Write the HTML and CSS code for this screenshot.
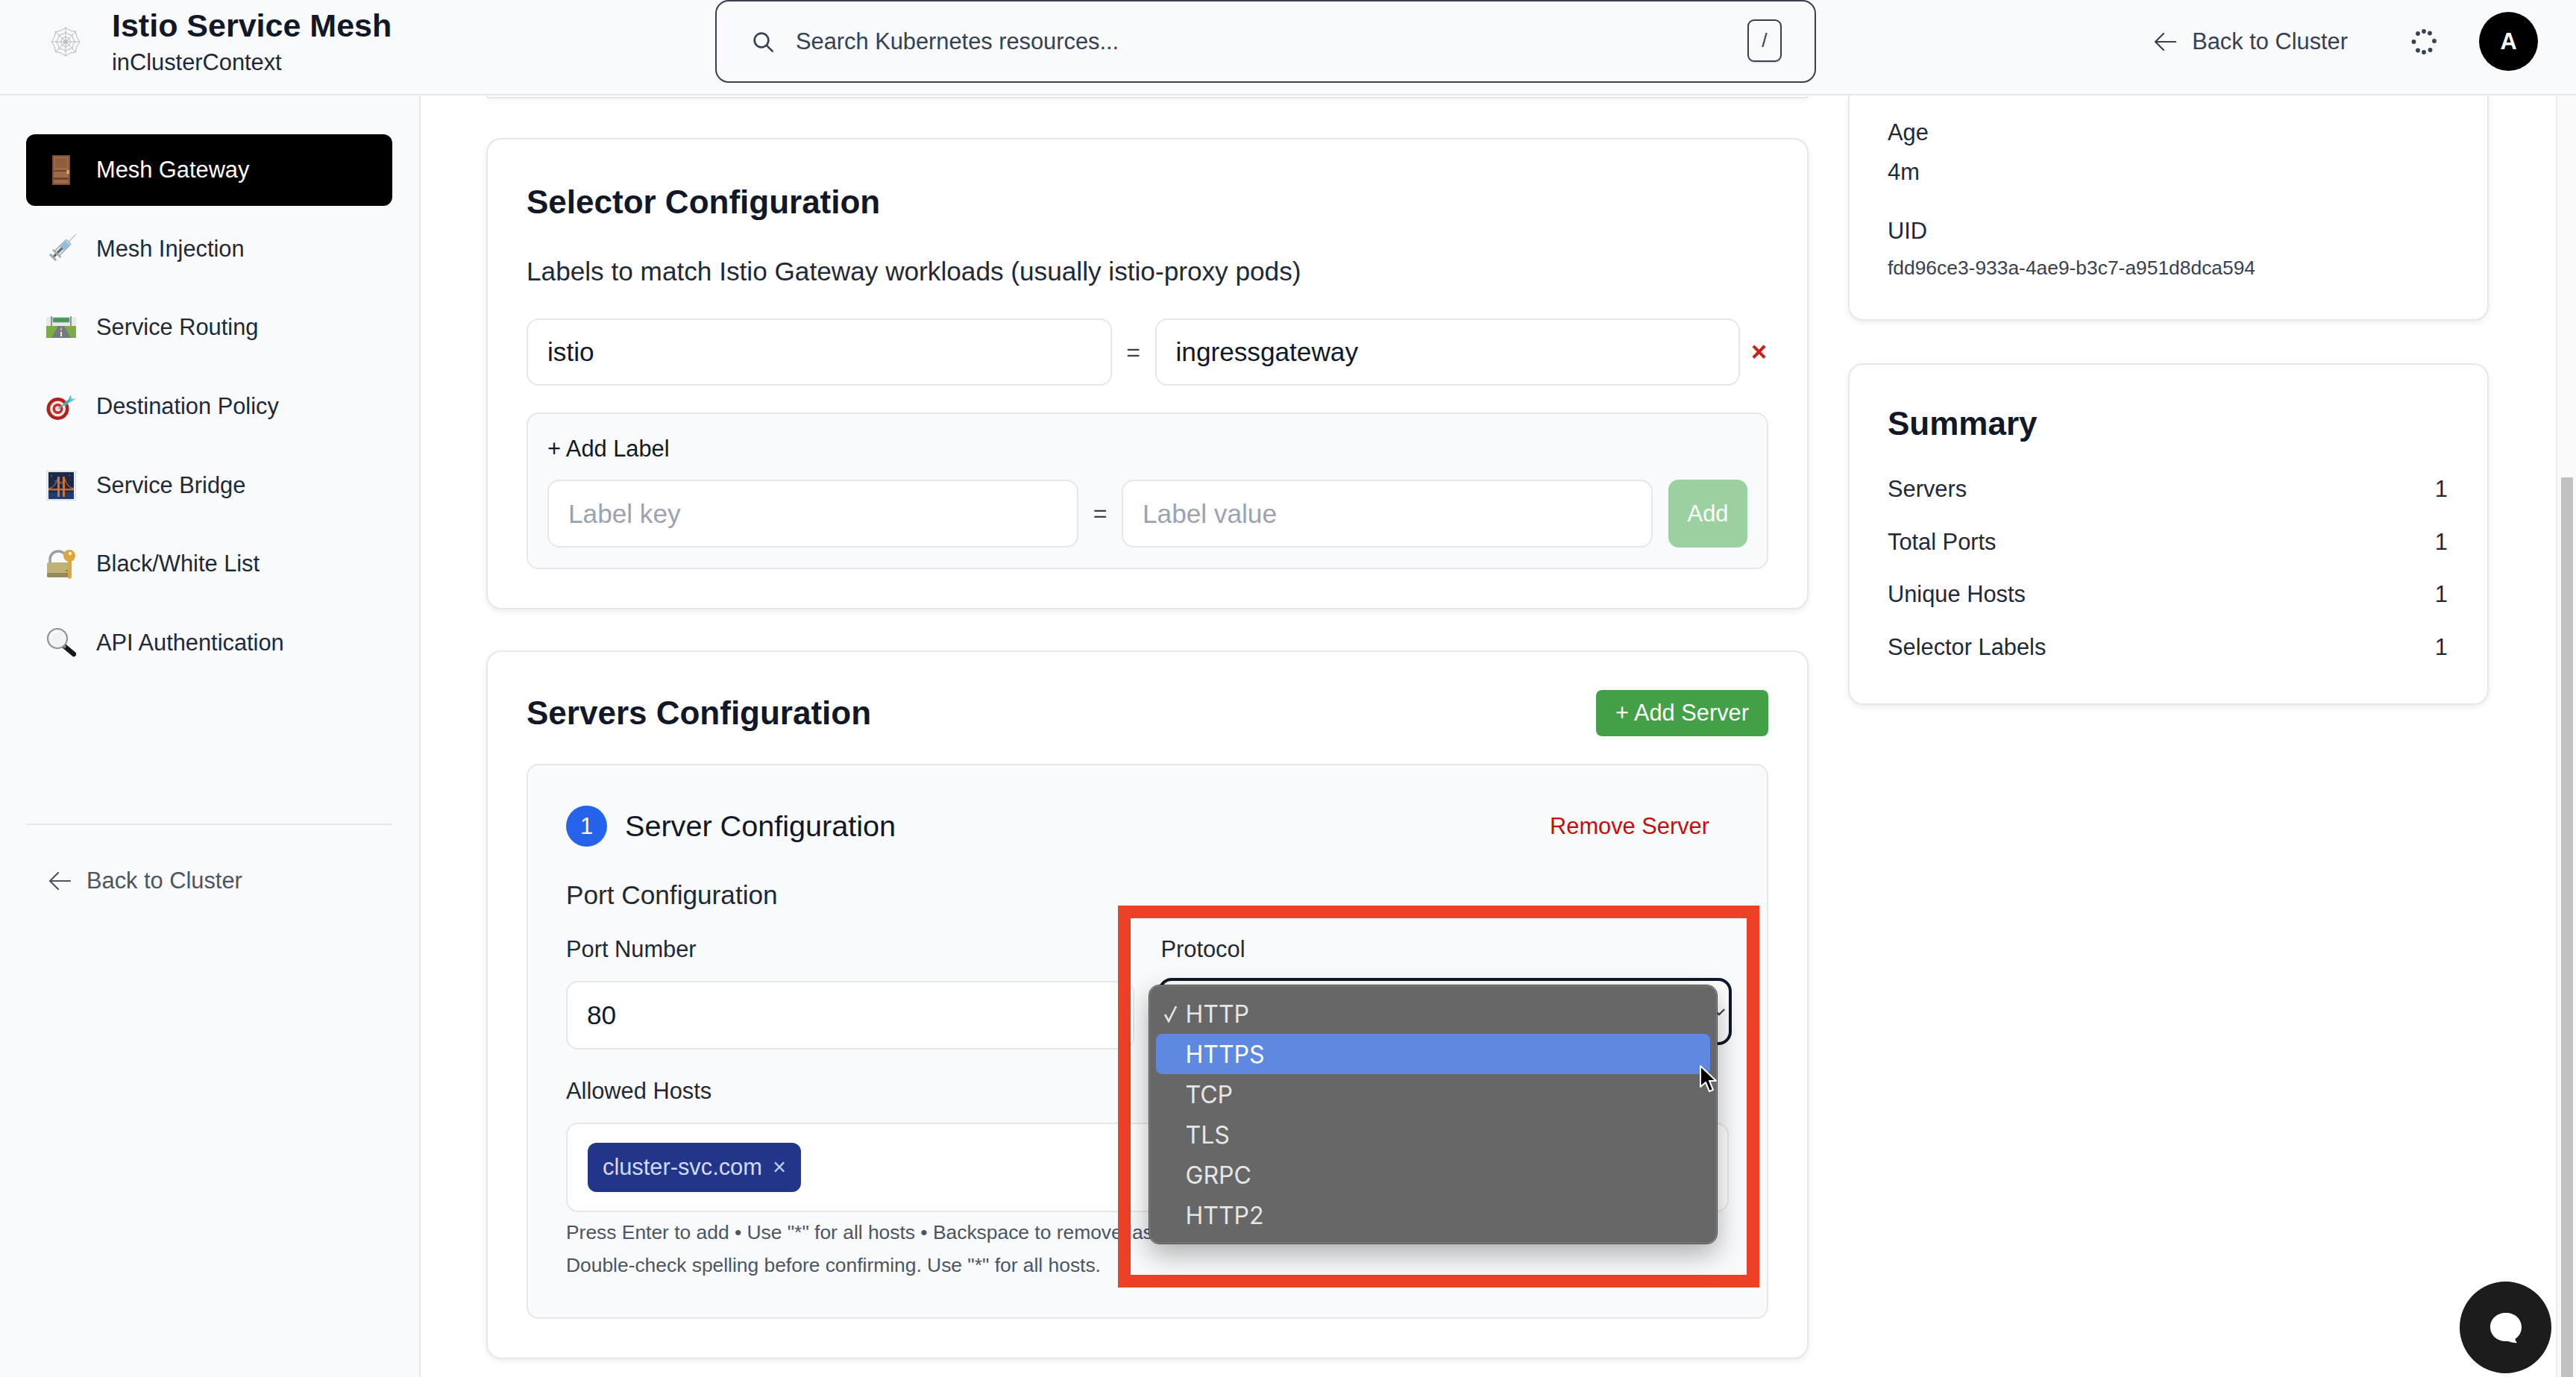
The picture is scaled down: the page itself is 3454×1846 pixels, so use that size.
FILE: index.html
```html
<!DOCTYPE html>
<html lang="en">
<head>
<meta charset="utf-8">
<title>Istio Service Mesh</title>
<link rel="stylesheet" href="styles.css">
</head>
<body>
<div class="app">
  <header class="topbar">
    <div class="brand">
      <svg class="web-icon" viewBox="-20 -20 40 40" fill="none" stroke="#b4b6b8" stroke-width="1">
        <defs><path id="webring" vector-effect="non-scaling-stroke" d="M0-19Q5.7-13.9 13.4-13.4 13.9-5.7 19 0 13.9 5.7 13.4 13.4 5.7 13.9 0 19-5.7 13.9-13.4 13.4-13.9 5.7-19 0-13.9-5.7-13.4-13.4-5.7-13.9 0-19Z"/></defs>
        <use href="#webring"/><use href="#webring" transform="scale(.66)"/><use href="#webring" transform="scale(.36)"/>
        <circle r="2.6"/>
        <path d="M0-19V19M-19 0H19M-13.4-13.4 13.4 13.4M13.4-13.4-13.4 13.4"/>
      </svg>
      <div class="brand-text">
        <div class="brand-title">Istio Service Mesh</div>
        <div class="brand-sub">inClusterContext</div>
      </div>
    </div>
    <div class="search">
      <svg class="search-icon" viewBox="0 0 24 24" fill="none" stroke="#374151" stroke-width="2" stroke-linecap="round"><circle cx="10.5" cy="10.5" r="7"/><path d="M16 16l5.5 5.5"/></svg>
      <span class="search-text">Search Kubernetes resources...</span>
      <kbd class="kbd">/</kbd>
    </div>
    <div class="top-actions">
      <a class="back-link">
        <svg class="arrow" viewBox="0 0 30 26" fill="none" stroke="currentColor" stroke-width="2.2" stroke-linecap="round" stroke-linejoin="round"><path d="M29 13H2M13 2 2 13l11 11"/></svg>
        Back to Cluster
      </a>
      <svg class="spinner" viewBox="-17 -17 34 34" fill="#374151">
        <circle cx="0" cy="-14" r="2.9"/><circle cx="8" cy="-11.5" r="2.9"/><circle cx="14" cy="-1" r="2.9"/><circle cx="8.5" cy="11" r="2.9"/><circle cx="0" cy="14" r="2.9"/><circle cx="-8" cy="11.5" r="2.9"/><circle cx="-13.5" cy="0" r="2.9"/><circle cx="-8" cy="-11" r="2.9"/>
      </svg>
      <div class="avatar">A</div>
    </div>
  </header>

  <div class="body-row">
    <nav class="sidebar">
      <ul class="nav-list">
        <li class="nav-item active">
          <svg class="emoji" viewBox="0 0 40 40"><rect x="8" y="0" width="24" height="40" fill="#7d4e33"/><rect x="10" y="2" width="20" height="36" fill="#a06a48"/><rect x="12" y="4" width="16" height="13" fill="#8f5c3d"/><rect x="10" y="20" width="20" height="2" fill="#6e452d"/><rect x="10" y="30" width="20" height="3" fill="#6e452d"/><rect x="27.500" y="20" width="3" height="5" fill="#e4b33c"/></svg>
          <span>Mesh Gateway</span>
        </li>
        <li class="nav-item">
          <svg class="emoji" viewBox="0 0 40 40"><g transform="rotate(45 20 20)"><rect x="19.500" y="-8" width="1" height="15" fill="#a9b1b8"/><rect x="15.500" y="6" width="9" height="22" rx="1.500" fill="#d6e6f0" stroke="#8a949c"/><rect x="16.500" y="8" width="7" height="11" fill="#8cbde0"/><rect x="18.500" y="18" width="3" height="17" fill="#5f686f"/><rect x="12.500" y="27" width="15" height="2.500" fill="#a2a9af"/><rect x="14" y="34" width="12" height="3" rx="1" fill="#a2a9af"/></g></svg>
          <span>Mesh Injection</span>
        </li>
        <li class="nav-item">
          <svg class="emoji" viewBox="0 0 40 40"><rect x="0" y="6" width="40" height="14" fill="#e6e9e6"/><rect x="0" y="18" width="40" height="16" fill="#7cac45"/><path d="M16 18h8l9 16H7z" fill="#74797d"/><path d="M19.500 20h1v4h-1zM19 26h2v6h-2z" fill="#eee"/><rect x="6" y="5" width="2" height="13" fill="#8e9498"/><rect x="32" y="5" width="2" height="13" fill="#8e9498"/><rect x="9" y="7" width="22" height="6" fill="#3f9b58" stroke="#9aa0a3" stroke-width=".8"/></svg>
          <span>Service Routing</span>
        </li>
        <li class="nav-item">
          <svg class="emoji" viewBox="0 0 40 40"><circle cx="15.500" cy="23" r="15" fill="#b3211f"/><circle cx="15.500" cy="23" r="10.500" fill="#f1e7e2"/><circle cx="15.500" cy="23" r="7" fill="#c42b27"/><circle cx="15.500" cy="23" r="3.500" fill="#f1e7e2"/><path d="M16 23 31 12" stroke="#8b9aa3" stroke-width="2"/><path d="M24 18l8-7" stroke="#3fb3c2" stroke-width="4"/><path d="M30 9l3-5 1 6 6-1-7 5z" fill="#5cc6d0"/></svg>
          <span>Destination Policy</span>
        </li>
        <li class="nav-item">
          <svg class="emoji" viewBox="0 0 40 40"><rect x="0" y="0" width="40" height="40" fill="#e8edf1" stroke="#c7cdd2"/><rect x="3" y="2" width="34" height="36" fill="#1b2a4a"/><rect x="3" y="29" width="34" height="9" fill="#1f3d72"/><path d="M3 24q9-1 13-15M37 24Q28 23 24 9M16 9q4 16 8 0" fill="none" stroke="#d98a4a" stroke-width="1"/><rect x="3" y="24" width="34" height="2.500" fill="#c06a34"/><rect x="15" y="8" width="3" height="27" fill="#c9733a"/><rect x="22" y="8" width="3" height="27" fill="#c9733a"/><circle cx="7" cy="7" r=".6" fill="#ffd"/><circle cx="31" cy="6" r=".6" fill="#ffd"/><circle cx="12" cy="14" r=".5" fill="#ffd"/></svg>
          <span>Service Bridge</span>
        </li>
        <li class="nav-item">
          <svg class="emoji" viewBox="0 0 40 40"><path d="M5 20v-6C5 7 11 3 16 3s10 3 11 8" fill="none" stroke="#9a9ea1" stroke-width="3.500"/><rect x="1" y="18" width="29" height="20" rx="2" fill="#bfb276"/><rect x="1" y="32" width="29" height="6" rx="2" fill="#958a55"/><circle cx="31" cy="9" r="8" fill="#dba63b"/><circle cx="32" cy="6" r="2.200" fill="#f8efd3"/><path d="M29 15h5v23l-3 3-2-3z" fill="#dba63b"/><path d="M29 28h-3v2h3zM29 32h-3v2h3z" fill="#a87a22"/></svg>
          <span>Black/White List</span>
        </li>
        <li class="nav-item">
          <svg class="emoji" viewBox="0 0 40 40"><path d="M24 24 37 35" stroke="#17181a" stroke-width="6.500" stroke-linecap="round"/><path d="M21 22l5 4" stroke="#84888b" stroke-width="3.500"/><circle cx="15" cy="14" r="13" fill="#f0f3f5" stroke="#8f9498" stroke-width="2.200"/><path d="M6 13a9 9 0 0 1 9-8" fill="none" stroke="#fff" stroke-width="2"/></svg>
          <span>API Authentication</span>
        </li>
      </ul>
      <div class="side-divider"></div>
      <a class="side-back">
        <svg class="arrow" viewBox="0 0 30 26" fill="none" stroke="currentColor" stroke-width="2.200" stroke-linecap="round" stroke-linejoin="round"><path d="M29 13H2M13 2 2 13l11 11"/></svg>
        Back to Cluster
      </a>
    </nav>

    <main class="main">
      <div class="col-left">
        <div class="card stub"></div>

        <section class="card selector">
          <h2 class="card-title">Selector Configuration</h2>
          <p class="desc">Labels to match Istio Gateway workloads (usually istio-proxy pods)</p>
          <div class="label-row">
            <div class="input grow">istio</div>
            <span class="eq">=</span>
            <div class="input grow">ingressgateway</div>
            <span class="remove-x">×</span>
          </div>
          <div class="add-box">
            <div class="add-title">+ Add Label</div>
            <div class="add-row">
              <div class="input grow placeholder">Label key</div>
              <span class="eq">=</span>
              <div class="input grow placeholder">Label value</div>
              <button class="add-btn">Add</button>
            </div>
          </div>
        </section>

        <section class="card servers">
          <div class="servers-head">
            <h2 class="card-title">Servers Configuration</h2>
            <button class="add-server">+ Add Server</button>
          </div>
          <div class="panel">
            <div class="panel-head">
              <div class="panel-name"><span class="step">1</span><span class="panel-title">Server Configuration</span></div>
              <a class="remove-server">Remove Server</a>
            </div>
            <h3 class="port-title">Port Configuration</h3>
            <div class="port-grid">
              <div class="field">
                <label class="field-label">Port Number</label>
                <div class="input port-input">80</div>
              </div>
              <div class="field protocol">
                <label class="field-label">Protocol</label>
                <div class="select-box">
                  <svg class="chev" viewBox="0 0 20 12" fill="none" stroke="#374151" stroke-width="2.400"><path d="M2 2l8 8 8-8"/></svg>
                </div>
                <div class="red-frame"></div>
                <ul class="dropdown">
                  <li class="opt"><svg class="check" viewBox="0 0 20 24" fill="none" stroke="#e6e6e6" stroke-width="2.600"><path d="M2 13l5 9L17 2"/></svg>HTTP</li>
                  <li class="opt hot">HTTPS</li>
                  <li class="opt">TCP</li>
                  <li class="opt">TLS</li>
                  <li class="opt">GRPC</li>
                  <li class="opt">HTTP2</li>
                </ul>
                <svg class="cursor" viewBox="0 0 24 38"><path d="M2 2v28l7-6 5 12 5-2-5-12h9z" fill="#000" stroke="#fff" stroke-width="2" stroke-linejoin="round"/></svg>
              </div>
            </div>
            <label class="field-label hosts-label">Allowed Hosts</label>
            <div class="hosts">
              <span class="chip">cluster-svc.com<span class="chip-x">×</span></span>
            </div>
            <p class="hint first">Press Enter to add • Use "*" for all hosts • Backspace to remove last</p>
            <p class="hint">Double-check spelling before confirming. Use "*" for all hosts.</p>
          </div>
        </section>
      </div>

      <aside class="col-right">
        <section class="card meta">
          <div class="meta-label">Age</div>
          <div class="meta-value">4m</div>
          <div class="meta-label uid">UID</div>
          <div class="meta-uid">fdd96ce3-933a-4ae9-b3c7-a951d8dca594</div>
        </section>
        <section class="card summary">
          <h2 class="card-title">Summary</h2>
          <div class="sum-list">
            <div class="sum-row"><span>Servers</span><span>1</span></div>
            <div class="sum-row"><span>Total Ports</span><span>1</span></div>
            <div class="sum-row"><span>Unique Hosts</span><span>1</span></div>
            <div class="sum-row"><span>Selector Labels</span><span>1</span></div>
          </div>
        </section>
      </aside>
    </main>

    <div class="scroll-track"><div class="scroll-thumb"></div></div>
  </div>

  <button class="chat" aria-label="Chat">
    <svg viewBox="0 0 44 42" width="44" height="42"><path d="M22 1C10 1 1 9 1 20s9 19 21 19c2 0 4 0 6 1 2 .800 6 1.500 9 1-1.500-1.500-2.500-3-2.500-5C40 32 43 27 43 20 43 9 34 1 22 1z" fill="#fff"/></svg>
  </button>
</div>
</body>
</html>
```
FILE: styles.css
```css
* { box-sizing: border-box; }
html, body { margin: 0; padding: 0; height: 100%; }
body { font-family: "Liberation Sans", Arial, sans-serif; color: #1f2937; background: #fff; overflow: hidden; }
h2, h3, p, ul { margin: 0; padding: 0; }
ul { list-style: none; }
button { font-family: inherit; border: 0; }

.app { position: relative; height: 1846px; display: flex; flex-direction: column; overflow: hidden; }

/* top bar */
.topbar { height: 128px; flex: none; display: grid; grid-template-columns: 959px 1476px 1fr; align-items: start; background: #f8fafc; border-bottom: 2px solid #e5e7eb; position: relative; z-index: 2; }
.brand { display: flex; align-items: center; height: 111px; padding-left: 68px; }
.web-icon { width: 40px; height: 40px; }
.brand-text { margin-left: 42px; }
.brand-title { font-size: 43px; line-height: 56px; font-weight: 700; color: #111827; white-space: nowrap; }
.brand-sub { font-size: 30.8px; line-height: 44px; color: #1f2937; }
.search { height: 111px; display: flex; align-items: center; padding: 0 44px 0 46px; border: 2px solid #374151; border-top-width: 2px; border-radius: 18px; background: #f8fafc; }
.search-icon { width: 32px; height: 32px; flex: none; }
.search-text { font-size: 30.8px; color: #374151; margin-left: 28px; flex: 1; }
.kbd { width: 46px; height: 57px; margin-top: -2px; display: flex; align-items: center; justify-content: center; border: 2px solid #374151; border-radius: 9px; font-family: "Liberation Sans", sans-serif; font-size: 26.4px; color: #374151; box-shadow: 0 1px 2px rgba(0,0,0,.15); }
.top-actions { height: 111px; display: flex; align-items: center; justify-content: flex-end; padding-right: 51px; }
.back-link { display: flex; align-items: center; font-size: 30.8px; color: #374151; white-space: nowrap; }
.arrow { width: 30px; height: 26px; margin-right: 21px; flex: none; }
.spinner { width: 34px; height: 34px; margin: 0 57px 0 85px; }
.avatar { width: 79px; height: 79px; border-radius: 50%; background: #000; color: #fff; display: flex; align-items: center; justify-content: center; font-size: 30.8px; font-weight: 700; }

/* layout */
.body-row { flex: 1; min-height: 0; display: flex; }
.sidebar { width: 564px; flex: none; background: #f8fafc; border-right: 2px solid #e5e7eb; padding: 52px 36px 0 35px; }
.nav-list { display: flex; flex-direction: column; gap: 9.7px; }
.nav-item { height: 96px; display: flex; align-items: center; padding-left: 27px; border-radius: 12px; font-size: 30.8px; color: #1f2937; }
.nav-item.active { background: #000; color: #fff; }
.emoji { width: 40px; height: 40px; flex: none; margin-right: 27px; }
.side-divider { height: 2px; background: #e5e7eb; margin-top: 194px; }
.side-back { display: flex; align-items: center; height: 44px; margin-top: 53px; padding-left: 30px; font-size: 30.8px; color: #4b5563; }

.main { flex: 1; min-width: 0; display: flex; align-items: flex-start; padding-left: 88px; gap: 53px; background: #fff; }
.col-left { width: 1773px; flex: none; display: flex; flex-direction: column; }
.col-right { width: 859px; flex: none; display: flex; flex-direction: column; gap: 57px; }
.scroll-track { width: 27px; flex: none; background: #fafafa; border-left: 2px solid #ececec; padding: 512px 4px 0 5px; }
.scroll-thumb { height: 100%; background: #c1c1c1; }

/* cards */
.card { background: #fff; border: 2px solid #e5e7eb; border-radius: 20px; box-shadow: 0 3px 8px rgba(0,0,0,.07); }
.stub { height: 4px; border-top: 0; border-radius: 0 0 20px 20px; margin-bottom: 53px; }
.card-title { font-size: 44px; line-height: 62px; font-weight: 700; color: #111827; }
.selector { height: 632px; padding: 53px 52px 0; }
.desc { font-size: 35.2px; line-height: 44px; margin-top: 40px; color: #1f2937; }
.label-row { display: flex; align-items: center; margin-top: 41px; }
.input { height: 90px; display: flex; align-items: center; padding: 0 26px; background: #fff; border: 2px solid #e5e7eb; border-radius: 16px; font-size: 35.2px; color: #111827; }
.grow { flex: 1 1 0; min-width: 0; }
.eq { width: 58px; flex: none; text-align: center; font-size: 32px; color: #374151; }
.remove-x { width: 38px; flex: none; text-align: right; font-size: 36px; line-height: 40px; font-weight: 700; color: #c81e1e; padding-right: 2px; }
.add-box { margin-top: 36px; height: 210px; padding: 26px; background: #f9fafb; border: 2px solid #e5e7eb; border-radius: 16px; }
.add-title { font-size: 30.8px; line-height: 42px; color: #111827; }
.add-row { display: flex; align-items: center; margin-top: 20px; }
.add-row .input { height: 91px; }
.placeholder { color: #9ca3af; }
.add-btn { width: 106px; height: 91px; flex: none; margin-left: 21px; background: #9bd0a1; color: #fff; font-size: 30.8px; border-radius: 14px; }

.servers { margin-top: 55px; height: 950px; padding: 51px 52px 0; }
.servers-head { display: flex; align-items: center; justify-content: space-between; height: 62px; }
.add-server { width: 231px; height: 62px; background: #43a047; color: #fff; font-size: 30.8px; border-radius: 8px; }
.panel { margin-top: 37px; height: 744px; padding: 54px 51px 0; background: #f9fafb; border: 2px solid #e5e7eb; border-radius: 16px; }
.panel-head { display: flex; align-items: center; justify-content: space-between; height: 55px; }
.panel-name { display: flex; align-items: center; }
.step { width: 55px; height: 55px; border-radius: 50%; background: #2563eb; color: #fff; display: flex; align-items: center; justify-content: center; font-size: 30.8px; }
.panel-title { font-size: 39.6px; margin-left: 24px; color: #111827; }
.remove-server { font-size: 30.8px; color: #c40d0d; padding-right: 26px; }
.port-title { font-size: 35.2px; line-height: 42px; font-weight: 400; margin-top: 44px; color: #1f2937; }
.port-grid { display: grid; grid-template-columns: 1fr 1fr; gap: 36px; margin-top: 32px; }
.field { position: relative; }
.field-label { display: block; font-size: 30.8px; line-height: 40px; color: #1f2937; }
.port-input { height: 92px; margin-top: 22px; }
.select-box { position: relative; height: 90px; margin: 18px -4px 0; background: #fff; border: 4px solid #0f172a; border-radius: 18px; }
.chev { position: absolute; right: 4px; top: 36px; width: 18px; height: 11px; }
.hosts-label { margin-top: 36px; }
.hosts { height: 120px; margin-top: 22px; padding: 25px 27px; background: #fff; border: 2px solid #e5e7eb; border-radius: 16px; }
.chip { display: inline-flex; align-items: center; height: 66px; padding: 0 20px; background: #233588; color: #cfdcfc; border-radius: 12px; font-size: 30.8px; }
.chip-x { margin-left: 14px; font-size: 30.8px; color: #bfd0fb; }
.hint { font-size: 26.4px; line-height: 44px; color: #4b5563; white-space: nowrap; }
.hint.first { margin-top: 5px; }

/* overlays */
.red-frame { position: absolute; left: -58px; top: -39px; width: 860px; height: 512px; border: 17px solid #ec4126; z-index: 3; pointer-events: none; }
.dropdown { position: absolute; left: -16px; top: 68px; width: 761px; height: 346px; padding: 10px 8px; background: #676767; border: 1px solid #8a8a8a; outline: 1px solid #444; border-radius: 13px; box-shadow: 0 14px 36px rgba(0,0,0,.32); z-index: 4; }
.opt { position: relative; height: 54px; display: flex; align-items: center; padding-left: 40px; font-family: Inter, "Liberation Sans", sans-serif; font-size: 32px; color: #e6e6e6; border-radius: 8px; }
.opt.hot { background: #5f88e0; color: #fff; }
.check { position: absolute; left: 10px; top: 15px; width: 20px; height: 24px; }
.cursor { position: absolute; left: 721px; top: 174px; width: 24px; height: 38px; z-index: 5; }

/* right column */
.meta { height: 302px; padding: 28px 52px 0 51px; border-top: 0; border-radius: 0 0 20px 20px; }
.meta-label { font-size: 30.8px; line-height: 44px; color: #1f2937; }
.meta-label.uid { margin-top: 35px; }
.meta-value { font-size: 30.8px; line-height: 44px; margin-top: 9px; color: #1f2937; }
.meta-uid { font-size: 26.4px; line-height: 38px; margin-top: 8px; color: #374151; }
.summary { height: 458px; padding: 48px 53px 0 51px; }
.sum-list { display: flex; flex-direction: column; gap: 26.5px; margin-top: 35px; }
.sum-row { display: flex; justify-content: space-between; height: 44px; align-items: center; font-size: 30.8px; color: #1f2937; }

.chat { position: absolute; left: 3298px; top: 1718px; width: 123px; height: 123px; padding: 0; display: flex; align-items: center; justify-content: center; border-radius: 50%; background: #1c1c1c; z-index: 6; }
```
